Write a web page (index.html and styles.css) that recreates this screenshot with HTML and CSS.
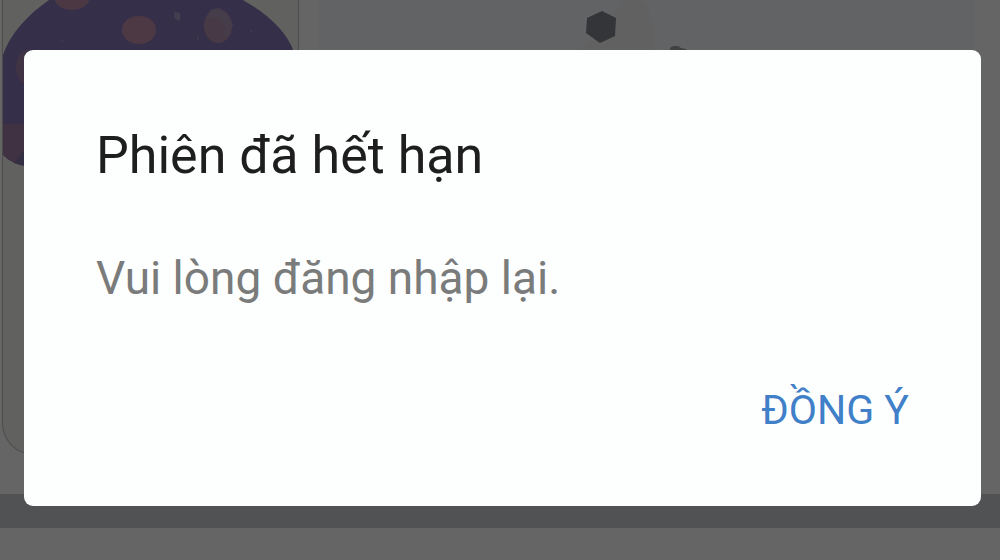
FILE: index.html
```html
<!DOCTYPE html>
<html lang="vi">
<head>
    <meta charset="UTF-8">
    <meta name="viewport" content="width=device-width, initial-scale=1.0">
    <title>Phiên đã hết hạn</title>
    <link rel="stylesheet" href="styles.css">
</head>
<body>
    <main class="products" aria-hidden="true">
        <div class="product-card">
            <svg class="product-image" viewBox="0 0 295 170">
                <defs>
                    <clipPath id="cap">
                        <path d="M0 55C7 34 25 14 49 -2L236 -2C263 12 283 30 291 52L291 166L24 166Q10 165 0 155Z"/>
                    </clipPath>
                </defs>
                <g clip-path="url(#cap)">
                    <rect width="295" height="170" fill="#8476b8"/>
                    <ellipse cx="69" cy="-3" rx="18" ry="13" fill="#bf8ca8"/>
                    <ellipse cx="136" cy="30" rx="17" ry="14" fill="#c08ea9"/>
                    <ellipse cx="215" cy="26" rx="14" ry="17" fill="#b590b0"/>
                    <path d="M203 17l5-7 8-2 9 8 5 8-3 9-8 3 4-10-8-8z" fill="#ac9cb8"/>
                    <ellipse cx="24" cy="67" rx="11" ry="17" fill="#9f80ab"/>
                    <path d="M0 124h30v42H0z" fill="#a07ea6"/>
                    <path d="M10 166Q18 150 30 144v22z" fill="#8476a8"/>
                    <path d="M172 12l5 2-1 7-4-3zM58 39l2 3M195 36v5M247 30l2 2" fill="#a79dc2" stroke="#a79dc2"/>
                </g>
            </svg>
        </div>
        <div class="product-panel">
            <svg class="product-shapes" viewBox="0 0 120 50">
                <path d="M0 50Q30 30 43 0H64Q78 22 73 50Z" fill="#f4f2f2"/>
                <path d="M23 11L37 18 36 36 21 43 7 33 8 18Z" fill="#80858f"/>
                <path d="M91 50v-2l3-2h5l3 2 5 1v1z" fill="#a0a2a5"/>
            </svg>
        </div>
    </main>
    <div class="divider"></div>

    <div class="overlay">
        <section class="dialog" role="alertdialog" aria-modal="true" aria-labelledby="dialog-title" aria-describedby="dialog-message">
            <h1 class="dialog-title" id="dialog-title">Phiên đã hết hạn</h1>
            <p class="dialog-message" id="dialog-message">Vui lòng đăng nhập lại.</p>
            <div class="dialog-actions">
                <button class="dialog-btn" type="button">ĐỒNG Ý</button>
            </div>
        </section>
    </div>
</body>
</html>
```
FILE: styles.css
```css
* {
    box-sizing: border-box;
}
body {
    margin: 0;
    background-color: #fdfdfd;
    font-family: Roboto, "Noto Sans", sans-serif;
}
.products {
    display: flex;
    gap: 20px;
    height: 494px;
    padding: 0 26px 39px 2px;
}
.product-card {
    width: 297px;
    border: 1px solid #bdbdbd;
    border-top: none;
    border-radius: 0 0 32px 32px;
    background-color: #f3f3ef;
    overflow: hidden;
}
.product-image {
    display: block;
    width: 100%;
}
.product-panel {
    flex: 1;
    padding-left: 260px;
    background-color: #f5f7fb;
}
.product-shapes {
    display: block;
    width: 120px;
}
.divider {
    height: 34px;
    background-color: #c8ccd0;
}
.overlay {
    position: fixed;
    inset: 0;
    display: flex;
    align-items: flex-start;
    padding: 50px 19px 50px 24px;
    background-color: rgba(0, 0, 0, 0.6);
}
.dialog {
    flex: 1;
    padding: 76px 60px 64px 72px;
    border-radius: 9px;
    background-color: #fdfefe;
}
.dialog-title {
    margin: 0;
    color: #1e1e1e;
    font-size: 52px;
    font-weight: 400;
    line-height: 60px;
}
.dialog-message {
    margin: 64px 0 72px;
    color: #7a7b7b;
    font-size: 46px;
    line-height: 56px;
}
.dialog-actions {
    display: flex;
    justify-content: flex-end;
}
.dialog-btn {
    padding: 8px 12px;
    border: none;
    background: none;
    color: #3f80c8;
    font-family: inherit;
    font-size: 41px;
    line-height: 48px;
    cursor: pointer;
}
```
